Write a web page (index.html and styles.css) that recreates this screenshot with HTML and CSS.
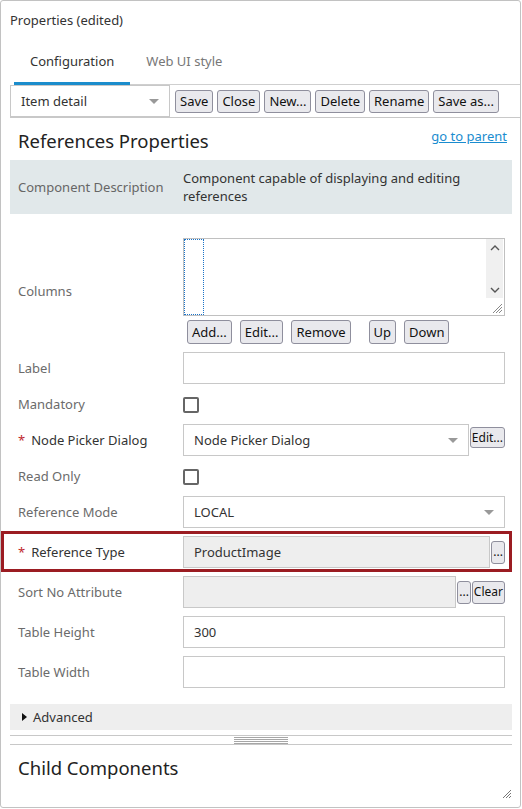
FILE: index.html
```html
<!DOCTYPE html>
<html>
<head>
<meta charset="utf-8">
<link rel="stylesheet" href="styles.css">
</head>
<body>
<div class="frame">
  <div class="title">Properties (edited)</div>
  <div class="tabs">
    <div class="tab active">Configuration</div>
    <div class="tab">Web UI style</div>
  </div>
  <div class="toolbar">
    <div class="select sel-item"><span>Item detail</span><span class="arrow"></span></div>
    <button class="btn">Save</button>
    <button class="btn">Close</button>
    <button class="btn">New...</button>
    <button class="btn">Delete</button>
    <button class="btn">Rename</button>
    <button class="btn">Save as...</button>
  </div>
  <div class="head">
    <h2 class="h">References Properties</h2>
    <a class="link" href="#">go to parent</a>
  </div>
  <div class="desc">
    <div class="lbl">Component Description</div>
    <div class="val">Component capable of displaying and editing references</div>
  </div>
  <div class="form">
    <div class="row row-cols">
      <div class="lbl">Columns</div>
      <div class="val">
        <div class="listbox">
          <div class="focus"></div>
          <div class="scroll">
            <svg class="chev" width="10" height="6" viewBox="0 0 10 6"><path d="M1 5 L5 1 L9 5" fill="none" stroke="#555" stroke-width="1.4"/></svg>
            <svg class="chev" width="10" height="6" viewBox="0 0 10 6"><path d="M1 1 L5 5 L9 1" fill="none" stroke="#555" stroke-width="1.4"/></svg>
          </div>
          <svg class="lgrip" width="12" height="12" viewBox="0 0 12 12"><path d="M11 2 L2 11 M11 5 L5 11 M11 8 L8 11" stroke="#888" stroke-width="1"/></svg>
        </div>
        <div class="colbtns">
          <button class="btn">Add...</button>
          <button class="btn">Edit...</button>
          <button class="btn">Remove</button>
          <button class="btn gap">Up</button>
          <button class="btn">Down</button>
        </div>
      </div>
    </div>
    <div class="row">
      <div class="lbl">Label</div>
      <div class="val"><div class="input"></div></div>
    </div>
    <div class="row row-check">
      <div class="lbl">Mandatory</div>
      <div class="val"><div class="check"></div></div>
    </div>
    <div class="row">
      <div class="lbl req"><span class="ast">*</span>Node Picker Dialog</div>
      <div class="val inline">
        <div class="select grow"><span>Node Picker Dialog</span><span class="arrow"></span></div>
        <button class="btn small">Edit...</button>
      </div>
    </div>
    <div class="row row-check">
      <div class="lbl">Read Only</div>
      <div class="val"><div class="check"></div></div>
    </div>
    <div class="row">
      <div class="lbl">Reference Mode</div>
      <div class="val"><div class="select"><span>LOCAL</span><span class="arrow"></span></div></div>
    </div>
    <div class="row marked">
      <div class="lbl req"><span class="ast">*</span>Reference Type</div>
      <div class="val inline">
        <div class="input ro grow">ProductImage</div>
        <button class="btn tiny">...</button>
      </div>
    </div>
    <div class="row">
      <div class="lbl">Sort No Attribute</div>
      <div class="val inline">
        <div class="input ro grow"></div>
        <button class="btn tiny">...</button>
        <button class="btn tiny">Clear</button>
      </div>
    </div>
    <div class="row">
      <div class="lbl">Table Height</div>
      <div class="val"><div class="input">300</div></div>
    </div>
    <div class="row">
      <div class="lbl">Table Width</div>
      <div class="val"><div class="input"></div></div>
    </div>
  </div>
  <div class="advanced"><span class="tri"></span>Advanced</div>
  <div class="splitter"><div class="handle"></div></div>
  <h2 class="h child">Child Components</h2>
  <svg class="fgrip" width="12" height="12" viewBox="0 0 12 12"><path d="M11 3 L3 11 M11 6 L6 11 M11 9 L9 11" stroke="#777" stroke-width="1"/></svg>
</div>
</body>
</html>
```
FILE: styles.css
```css
* { box-sizing: border-box; }
html, body { margin: 0; padding: 0; background: #fff; }
body { font-family: "Noto Sans", "Open Sans", sans-serif; font-size: 13px; color: #333; }

.frame {
  position: relative;
  width: 521px;
  height: 808px;
  border: 1px solid #c2c2c2;
  border-radius: 3px;
  padding: 0 8px 0 9px;
}

.title { padding-top: 10px; height: 40px; line-height: 18px; color: #333; }

.tabs {
  display: flex;
  margin-left: 4px;
  margin-right: -8px;
  border-bottom: 1px solid #cfcfcf;
  height: 44px;
}
.tab {
  padding: 0 16px;
  line-height: 40px;
  color: #777;
  border-bottom: 3px solid transparent;
  margin-bottom: -1px;
}
.tab.active { color: #333; border-bottom-color: #1b8dcc; }

.toolbar {
  display: flex;
  align-items: center;
  gap: 4px;
  height: 33px;
  margin-right: -8px;
  border-bottom: 1px solid #c8c8c8;
}
.sel-item {
  width: 160px;
  height: 32px;
  border-width: 0 0 0 1px;
  margin-right: 1px;
  align-self: stretch;
}

.btn {
  font-family: inherit;
  font-size: 13px;
  color: #111;
  background: #e9e9ed;
  border: 1px solid #8f8f9d;
  border-radius: 3px;
  height: 23px;
  padding: 0 4px;
  line-height: 20px;
  margin: 0;
}

.select {
  position: relative;
  display: flex;
  align-items: center;
  height: 32px;
  border: 1px solid #c8c8c8;
  padding-left: 10px;
  color: #333;
  background: #fff;
}
.arrow {
  position: absolute;
  right: 10px;
  top: 50%;
  margin-top: -2px;
  width: 0; height: 0;
  border-left: 5px solid transparent;
  border-right: 5px solid transparent;
  border-top: 5px solid #999;
}

.head {
  display: flex;
  justify-content: space-between;
  align-items: flex-start;
  height: 42px;
  padding: 0 5px 0 8px;
}
.h { margin: 0; font-weight: normal; font-size: 18.5px; line-height: 28px; color: #222; padding-top: 9px; }
.link { color: #1a8ccf; font-size: 13px; margin-top: 9px; text-decoration: underline; }

.desc {
  display: grid;
  grid-template-columns: 173px 1fr;
  align-items: center;
  background: #e1e8ea;
  padding: 9px 7px 9px 0;
  line-height: 18px;
}
.desc .lbl { padding-left: 8px; color: #666; }
.desc .val { color: #333; }

.form { padding-top: 20px; }
.row {
  position: relative;
  display: grid;
  grid-template-columns: 173px 1fr;
  align-items: center;
  padding: 4px 7px 4px 0;
  min-height: 40px;
}
.row-check { min-height: 32px; padding: 0 7px 0 0; }
.lbl { padding-left: 8px; color: #6b6b6b; }
.lbl.req { color: #333; }
.ast { color: #c0282d; margin-right: 6px; }

.input {
  height: 32px;
  border: 1px solid #c8c8c8;
  padding-left: 10px;
  display: flex;
  align-items: center;
  color: #333;
  background: #fff;
}
.input.ro { background: #eeeeee; }
.inline { display: flex; align-items: center; }
.grow { flex: 1; }
.btn.small { padding: 0 1px; height: 21px; line-height: 18px; margin-left: 1px; font-size: 12px; align-self: flex-start; margin-top: 3px; }
.btn.tiny { padding: 0 1px; height: 23px; line-height: 20px; margin-left: 1px; font-size: 12px; }

.check {
  width: 16px; height: 16px;
  border: 2px solid #666;
  border-radius: 2px;
  margin-top: 1px;
}

.listbox {
  position: relative;
  height: 78px;
  border: 1px solid #c0c0c0;
}
.focus {
  position: absolute;
  left: 0; top: 0;
  width: 20px; height: 76px;
  border: 1px dotted #1a73c8;
}
.scroll {
  position: absolute;
  right: 1px; top: 0;
  width: 17px; height: 59px;
  background: #f0f0f0;
  display: flex;
  flex-direction: column;
  justify-content: space-between;
  align-items: center;
  padding: 6px 0 5px;
}
.lgrip { position: absolute; right: 1px; bottom: 1px; }
.colbtns { display: flex; gap: 8px; padding: 4px 0 0 4px; }
.colbtns .btn { height: 24px; }
.colbtns .gap { margin-left: 10px; }

.marked::after {
  content: "";
  position: absolute;
  left: -9px; top: -1px; right: 0; bottom: 0;
  border: 3px solid #9b1c22;
  pointer-events: none;
}

.advanced {
  margin-top: 12px;
  height: 26px;
  background: #eeeeee;
  display: flex;
  align-items: center;
  padding-left: 12px;
  color: #333;
}
.tri {
  width: 0; height: 0;
  border-top: 4px solid transparent;
  border-bottom: 4px solid transparent;
  border-left: 5px solid #111;
  margin-right: 6px;
}

.splitter {
  margin-top: 5px;
  height: 10px;
  border-top: 1px solid #c8c8c8;
  border-bottom: 1px solid #c8c8c8;
  display: flex;
  justify-content: center;
  padding-top: 1px;
}
.handle {
  width: 54px;
  height: 7px;
  background: repeating-linear-gradient(to bottom, #a6a6a6 0, #a6a6a6 1px, transparent 1px, transparent 2px);
}
.child { padding: 9px 0 0 8px; }
.fgrip { position: absolute; right: 8px; bottom: 8px; }
```
